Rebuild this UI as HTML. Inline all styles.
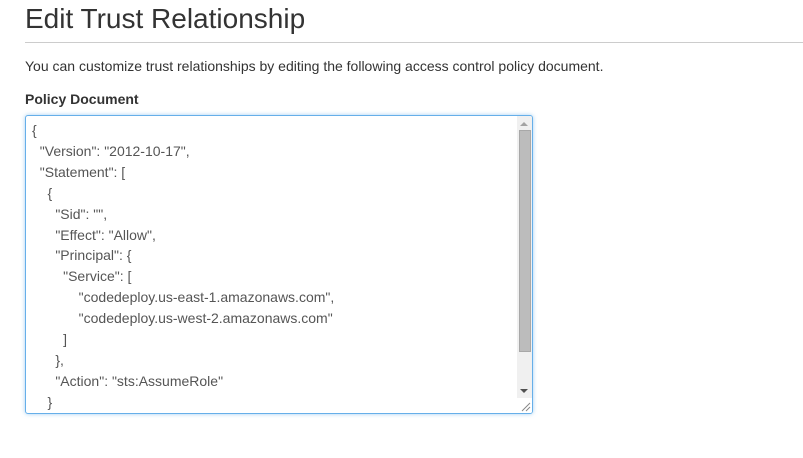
<!DOCTYPE html>
<html><head><style>
html,body{margin:0;padding:0;background:#fff;width:803px;height:458px;overflow:hidden;font-family:"Liberation Sans",sans-serif;color:#333;}
h1{position:absolute;left:25px;top:2px;margin:0;font-size:28px;font-weight:normal;color:#333;line-height:34px;}
.hr{position:absolute;left:25px;top:42px;width:778px;height:1px;background:#ccc;}
p{position:absolute;left:25px;top:56px;margin:0;font-size:14px;line-height:20px;}
.lbl{position:absolute;left:25px;top:89px;font-size:14px;font-weight:bold;line-height:20px;}
.ta{position:absolute;left:25px;top:115px;width:506px;height:297px;border:1px solid #66afe9;border-radius:3px;box-shadow:0 0 4px rgba(102,175,233,.6);overflow:hidden;background:#fff;}
pre{margin:0;position:absolute;left:6px;top:4px;font-family:"Liberation Sans",sans-serif;font-size:14px;line-height:20.9px;color:#555;}
.sb{position:absolute;right:0;top:0;width:15px;height:297px;background:#f0f0f0;}
.th{position:absolute;left:2px;top:14px;width:10px;height:220px;background:#bcbcbc;border:1px solid #a8a8a8;}
.up{position:absolute;left:3px;top:6px;width:0;height:0;border-left:4px solid transparent;border-right:4px solid transparent;border-bottom:4px solid #a3a3a3;}
.dn{position:absolute;left:3px;top:273px;width:0;height:0;border-left:4px solid transparent;border-right:4px solid transparent;border-top:4px solid #505050;}
.rz{position:absolute;right:0;bottom:0;width:15px;height:15px;background:#fff;}
</style></head><body>
<h1>Edit Trust Relationship</h1>
<div class="hr"></div>
<p>You can customize trust relationships by editing the following access control policy document.</p>
<div class="lbl">Policy Document</div>
<div class="ta">
<pre>{
  "Version": "2012-10-17",
  "Statement": [
    {
      "Sid": "",
      "Effect": "Allow",
      "Principal": {
        "Service": [
            "codedeploy.us-east-1.amazonaws.com",
            "codedeploy.us-west-2.amazonaws.com"
        ]
      },
      "Action": "sts:AssumeRole"
    }</pre>
<div class="sb"><div class="up"></div><div class="th"></div><div class="dn"></div></div>
<div class="rz"><svg width="15" height="15"><path d="M5 13L13 5M9 13L13 9" stroke="#888" stroke-width="1"/></svg></div>
</div>
</body></html>
